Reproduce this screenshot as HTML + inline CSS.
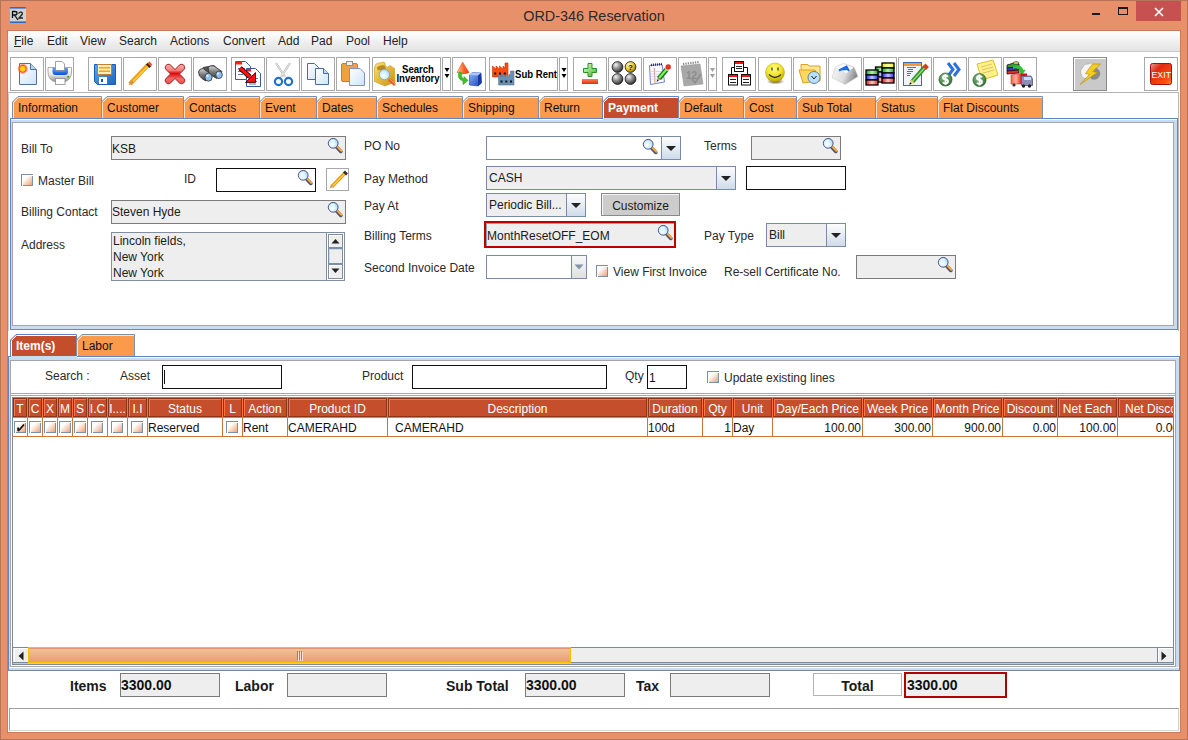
<!DOCTYPE html><html><head><meta charset="utf-8"><title>ORD-346 Reservation</title><style>
*{margin:0;padding:0;box-sizing:border-box}
html,body{width:1188px;height:740px;overflow:hidden}
body{position:relative;background:#e8906a;font-family:"Liberation Sans",sans-serif;font-size:12px;color:#222}
.a{position:absolute}
.t{font-size:12px;line-height:14px;white-space:nowrap;color:#2a2a2a}
.b{font-weight:bold}
</style></head><body>
<div class="a " style="left:0px;top:0px;width:1188px;height:1px;background:#b5755a"></div>
<div class="a " style="left:0px;top:0px;width:1px;height:740px;background:#b5755a"></div>
<div class="a " style="left:1187px;top:0px;width:1px;height:740px;background:#b5755a"></div>
<div class="a " style="left:0px;top:739px;width:1188px;height:1px;background:#b5755a"></div>
<div class="a " style="left:7px;top:30px;width:1174px;height:703px;background:#c97c5c"></div>
<div class="a " style="left:8px;top:31px;width:1172px;height:701px;background:#fff"></div>
<svg class="a" style="left:10px;top:7px" width="16" height="16"><rect x="0" y="0" width="16" height="16" fill="#cfd3d6"/><rect x="0" y="0" width="16" height="1.6" fill="#2a6ac8"/><rect x="0" y="14.4" width="16" height="1.6" fill="#2a6ac8"/>
<path d="M2.5 4.5 V11 M2 4.5 H5 Q7 4.5 7 6.3 Q7 8 5 8 H2.5 M4.5 8 L8 13" stroke="#111" stroke-width="1.3" fill="none"/>
<path d="M8.5 6.5 Q9.5 5 11 5.2 Q12.8 5.5 12.2 7.3 L9 11 H13" stroke="#222" stroke-width="1.3" fill="none"/></svg>
<div class="a" style="left:0;top:6px;width:1188px;text-align:center;font-size:14.4px;line-height:20px;color:#2b2b2b">ORD-346 Reservation</div>
<div class="a " style="left:1092px;top:13px;width:8px;height:2px;background:#1a1a1a"></div>
<div class="a " style="left:1118px;top:7px;width:10px;height:8px;border:1px solid #1a1a1a;border-top-width:2px"></div>
<div class="a " style="left:1136px;top:1px;width:45px;height:20px;background:#c75050"></div>
<svg class="a" style="left:1154px;top:7px" width="10" height="10" viewBox="0 0 10 10"><path d="M1 1L9 9M9 1L1 9" stroke="#fff" stroke-width="1.6"/></svg>
<div class="a " style="left:8px;top:31px;width:1172px;height:20px;background:linear-gradient(#ffffff,#e3e3e3)"></div>
<div class="a " style="left:8px;top:51px;width:1172px;height:1px;background:#c9c9c9"></div>
<div class="a t" style="left:14px;top:34px;color:#222">File</div>
<div class="a t" style="left:47px;top:34px;color:#222">Edit</div>
<div class="a t" style="left:80px;top:34px;color:#222">View</div>
<div class="a t" style="left:119px;top:34px;color:#222">Search</div>
<div class="a t" style="left:170px;top:34px;color:#222">Actions</div>
<div class="a t" style="left:223px;top:34px;color:#222">Convert</div>
<div class="a t" style="left:278px;top:34px;color:#222">Add</div>
<div class="a t" style="left:311px;top:34px;color:#222">Pad</div>
<div class="a t" style="left:346px;top:34px;color:#222">Pool</div>
<div class="a t" style="left:383px;top:34px;color:#222">Help</div>
<div class="a " style="left:14px;top:46px;width:7px;height:1px;background:#222"></div>
<div class="a " style="left:10px;top:57px;width:34px;height:34px;border:1px solid #a9a9a9;background:#fff"></div>
<div class="a " style="left:45px;top:57px;width:29px;height:34px;border:1px solid #a9a9a9;background:#fff"></div>
<div class="a " style="left:88px;top:57px;width:34px;height:34px;border:1px solid #a9a9a9;background:#fff"></div>
<div class="a " style="left:123px;top:57px;width:34px;height:34px;border:1px solid #a9a9a9;background:#fff"></div>
<div class="a " style="left:158px;top:57px;width:34px;height:34px;border:1px solid #a9a9a9;background:#fff"></div>
<div class="a " style="left:193px;top:57px;width:34px;height:34px;border:1px solid #a9a9a9;background:#fff"></div>
<div class="a " style="left:231px;top:57px;width:34px;height:34px;border:1px solid #a9a9a9;background:#fff"></div>
<div class="a " style="left:266px;top:57px;width:34px;height:34px;border:1px solid #a9a9a9;background:#fff"></div>
<div class="a " style="left:301px;top:57px;width:34px;height:34px;border:1px solid #a9a9a9;background:#fff"></div>
<div class="a " style="left:336px;top:57px;width:34px;height:34px;border:1px solid #a9a9a9;background:#fff"></div>
<div class="a " style="left:372px;top:57px;width:69px;height:34px;border:1px solid #a9a9a9;background:#fff"></div>
<div class="a " style="left:442px;top:57px;width:9px;height:34px;border:1px solid #a9a9a9;background:#fff"></div>
<div class="a " style="left:452px;top:57px;width:34px;height:34px;border:1px solid #a9a9a9;background:#fff"></div>
<div class="a " style="left:489px;top:57px;width:69px;height:34px;border:1px solid #a9a9a9;background:#fff"></div>
<div class="a " style="left:559px;top:57px;width:9px;height:34px;border:1px solid #a9a9a9;background:#fff"></div>
<div class="a " style="left:573px;top:57px;width:34px;height:34px;border:1px solid #a9a9a9;background:#fff"></div>
<div class="a " style="left:608px;top:57px;width:34px;height:34px;border:1px solid #a9a9a9;background:#fff"></div>
<div class="a " style="left:643px;top:57px;width:34px;height:34px;border:1px solid #a9a9a9;background:#fff"></div>
<div class="a " style="left:678px;top:57px;width:29px;height:34px;border:1px solid #a9a9a9;background:#fff"></div>
<div class="a " style="left:708px;top:57px;width:9px;height:34px;border:1px solid #a9a9a9;background:#fff"></div>
<div class="a " style="left:722px;top:57px;width:34px;height:34px;border:1px solid #a9a9a9;background:#fff"></div>
<div class="a " style="left:758px;top:57px;width:34px;height:34px;border:1px solid #a9a9a9;background:#fff"></div>
<div class="a " style="left:793px;top:57px;width:34px;height:34px;border:1px solid #a9a9a9;background:#fff"></div>
<div class="a " style="left:828px;top:57px;width:34px;height:34px;border:1px solid #a9a9a9;background:#fff"></div>
<div class="a " style="left:863px;top:57px;width:34px;height:34px;border:1px solid #a9a9a9;background:#fff"></div>
<div class="a " style="left:898px;top:57px;width:34px;height:34px;border:1px solid #a9a9a9;background:#fff"></div>
<div class="a " style="left:933px;top:57px;width:34px;height:34px;border:1px solid #a9a9a9;background:#fff"></div>
<div class="a " style="left:968px;top:57px;width:34px;height:34px;border:1px solid #a9a9a9;background:#fff"></div>
<div class="a " style="left:1003px;top:57px;width:34px;height:34px;border:1px solid #a9a9a9;background:#fff"></div>
<div class="a " style="left:1144px;top:57px;width:34px;height:34px;border:1px solid #a9a9a9;background:#fff"></div>
<div class="a " style="left:1073px;top:57px;width:34px;height:34px;border:1px solid #8a8a8a;background:#c9c9c9;box-shadow:inset 1px 1px 0 #fff"></div>
<div class="a b" style="left:388px;top:64px;width:60px;font-size:11px;line-height:11px;text-align:center;color:#000;transform:scaleX(0.87)">Search</div>
<div class="a b" style="left:388px;top:73px;width:60px;font-size:11px;line-height:11px;text-align:center;color:#000;transform:scaleX(0.87)">Inventory</div>
<div class="a b" style="left:515px;top:69px;font-size:11px;line-height:11px;color:#000;white-space:nowrap;transform:scaleX(0.87);transform-origin:0 0">Sub Rent</div>
<div class="a " style="left:8px;top:92px;width:1171px;height:1px;background:#b2b2b2"></div>
<div class="a " style="left:8px;top:92px;width:1px;height:239px;background:#c8ccd0"></div>
<div class="a " style="left:1178px;top:92px;width:1px;height:239px;background:#b8b8b8"></div>
<div class="a " style="left:10px;top:118px;width:1168px;height:1px;background:#6184c4"></div>
<div class="a " style="left:10px;top:118px;width:1px;height:212px;background:#6184c4"></div>
<div class="a " style="left:1177px;top:119px;width:1px;height:211px;background:#7a8899"></div>
<div class="a " style="left:10px;top:329px;width:1168px;height:1px;background:#7a8899"></div>
<div class="a " style="left:11px;top:119px;width:1166px;height:210px;background:#c8dcf1"></div>
<div class="a " style="left:11px;top:119px;width:1166px;height:1px;background:#fff"></div>
<div class="a " style="left:603px;top:118px;width:76px;height:2px;background:#c8dcf1"></div>
<div class="a " style="left:12px;top:122px;width:1162px;height:204px;background:#fff;border:1px solid #a6a6a6"></div>
<svg class="a" style="left:0;top:0" width="1188" height="740"><path d="M13 118V102L18 97H101V118Z" fill="#fb9a4b"/><path d="M13.5 118V102.5L18.5 97.5H101" fill="none" stroke="#ffe2c6" stroke-width="1"/><path d="M12.5 118V102L18 96.5H101.5V118" fill="none" stroke="#7d8fa6" stroke-width="1"/><path d="M102 118V102L107 97H183V118Z" fill="#fb9a4b"/><path d="M102.5 118V102.5L107.5 97.5H183" fill="none" stroke="#ffe2c6" stroke-width="1"/><path d="M101.5 118V102L107 96.5H183.5V118" fill="none" stroke="#7d8fa6" stroke-width="1"/><path d="M184 118V102L189 97H259V118Z" fill="#fb9a4b"/><path d="M184.5 118V102.5L189.5 97.5H259" fill="none" stroke="#ffe2c6" stroke-width="1"/><path d="M183.5 118V102L189 96.5H259.5V118" fill="none" stroke="#7d8fa6" stroke-width="1"/><path d="M260 118V102L265 97H316V118Z" fill="#fb9a4b"/><path d="M260.5 118V102.5L265.5 97.5H316" fill="none" stroke="#ffe2c6" stroke-width="1"/><path d="M259.5 118V102L265 96.5H316.5V118" fill="none" stroke="#7d8fa6" stroke-width="1"/><path d="M317 118V102L322 97H376V118Z" fill="#fb9a4b"/><path d="M317.5 118V102.5L322.5 97.5H376" fill="none" stroke="#ffe2c6" stroke-width="1"/><path d="M316.5 118V102L322 96.5H376.5V118" fill="none" stroke="#7d8fa6" stroke-width="1"/><path d="M377 118V102L382 97H462V118Z" fill="#fb9a4b"/><path d="M377.5 118V102.5L382.5 97.5H462" fill="none" stroke="#ffe2c6" stroke-width="1"/><path d="M376.5 118V102L382 96.5H462.5V118" fill="none" stroke="#7d8fa6" stroke-width="1"/><path d="M463 118V102L468 97H538V118Z" fill="#fb9a4b"/><path d="M463.5 118V102.5L468.5 97.5H538" fill="none" stroke="#ffe2c6" stroke-width="1"/><path d="M462.5 118V102L468 96.5H538.5V118" fill="none" stroke="#7d8fa6" stroke-width="1"/><path d="M539 118V102L544 97H602V118Z" fill="#fb9a4b"/><path d="M539.5 118V102.5L544.5 97.5H602" fill="none" stroke="#ffe2c6" stroke-width="1"/><path d="M538.5 118V102L544 96.5H602.5V118" fill="none" stroke="#7d8fa6" stroke-width="1"/><path d="M603 118V102L608 97H678V118Z" fill="#c44d2c"/><path d="M603.5 118V102.5L608.5 97.5H678" fill="none" stroke="#ffffff" stroke-width="1"/><path d="M602.5 118V102L608 96.5H678.5V118" fill="none" stroke="#6184c4" stroke-width="1"/><path d="M679 118V102L684 97H743V118Z" fill="#fb9a4b"/><path d="M679.5 118V102.5L684.5 97.5H743" fill="none" stroke="#ffe2c6" stroke-width="1"/><path d="M678.5 118V102L684 96.5H743.5V118" fill="none" stroke="#7d8fa6" stroke-width="1"/><path d="M744 118V102L749 97H796V118Z" fill="#fb9a4b"/><path d="M744.5 118V102.5L749.5 97.5H796" fill="none" stroke="#ffe2c6" stroke-width="1"/><path d="M743.5 118V102L749 96.5H796.5V118" fill="none" stroke="#7d8fa6" stroke-width="1"/><path d="M797 118V102L802 97H875V118Z" fill="#fb9a4b"/><path d="M797.5 118V102.5L802.5 97.5H875" fill="none" stroke="#ffe2c6" stroke-width="1"/><path d="M796.5 118V102L802 96.5H875.5V118" fill="none" stroke="#7d8fa6" stroke-width="1"/><path d="M876 118V102L881 97H937V118Z" fill="#fb9a4b"/><path d="M876.5 118V102.5L881.5 97.5H937" fill="none" stroke="#ffe2c6" stroke-width="1"/><path d="M875.5 118V102L881 96.5H937.5V118" fill="none" stroke="#7d8fa6" stroke-width="1"/><path d="M938 118V102L943 97H1042V118Z" fill="#fb9a4b"/><path d="M938.5 118V102.5L943.5 97.5H1042" fill="none" stroke="#ffe2c6" stroke-width="1"/><path d="M937.5 118V102L943 96.5H1042.5V118" fill="none" stroke="#7d8fa6" stroke-width="1"/></svg>
<div class="a t" style="left:18px;top:101px;color:#111">Information</div>
<div class="a t" style="left:107px;top:101px;color:#111">Customer</div>
<div class="a t" style="left:189px;top:101px;color:#111">Contacts</div>
<div class="a t" style="left:265px;top:101px;color:#111">Event</div>
<div class="a t" style="left:322px;top:101px;color:#111">Dates</div>
<div class="a t" style="left:382px;top:101px;color:#111">Schedules</div>
<div class="a t" style="left:468px;top:101px;color:#111">Shipping</div>
<div class="a t" style="left:544px;top:101px;color:#111">Return</div>
<div class="a t" style="left:608px;top:101px;color:#fff;font-weight:bold">Payment</div>
<div class="a t" style="left:684px;top:101px;color:#111">Default</div>
<div class="a t" style="left:749px;top:101px;color:#111">Cost</div>
<div class="a t" style="left:802px;top:101px;color:#111">Sub Total</div>
<div class="a t" style="left:881px;top:101px;color:#111">Status</div>
<div class="a t" style="left:943px;top:101px;color:#111">Flat Discounts</div>
<svg width="0" height="0" style="position:absolute"><defs>
<radialGradient id="lens" cx="0.4" cy="0.6" r="0.7"><stop offset="0" stop-color="#ffffff"/><stop offset="0.5" stop-color="#d2f2ff"/><stop offset="1" stop-color="#8fc8ea"/></radialGradient>
<linearGradient id="chk" x1="0" y1="0" x2="1" y2="1"><stop offset="0.25" stop-color="#ffffff"/><stop offset="1" stop-color="#f0a070"/></linearGradient>
<symbol id="mag" viewBox="0 0 16 17">
<path d="M9.2 9.6 L13.8 14.4" stroke="#50507a" stroke-width="3.6" stroke-linecap="round"/>
<path d="M10 9.3 L14.3 13.8" stroke="#f8a838" stroke-width="2" stroke-linecap="round"/>
<circle cx="6.2" cy="6.3" r="4.9" fill="url(#lens)" stroke="#55558a" stroke-width="1"/>
<path d="M4 4.5 Q5.5 3 7.5 3.6" stroke="#fff" stroke-width="0.9" fill="none"/>
</symbol>
</defs></svg>
<div class="a t" style="left:21px;top:142px;">Bill To</div>
<div class="a " style="left:111px;top:136px;width:235px;height:24px;border:1px solid #7b7b7b;background:#eeeeee;"></div>
<div class="a t" style="left:112px;top:142px;color:#1a1a1a">KSB</div>
<svg class="a" style="left:327px;top:137px" width="16" height="17"><use href="#mag"/></svg>
<svg class="a" style="left:21px;top:174px" width="12" height="12"><rect x="0" y="0" width="12" height="12" fill="#7990a8"/><rect x="1" y="1" width="10" height="10" fill="#fff"/><rect x="2" y="2" width="9" height="9" fill="url(#chk)"/><rect x="11" y="1" width="1" height="1" fill="#fff"/><rect x="1" y="11" width="1" height="1" fill="#fff"/></svg>
<div class="a t" style="left:38px;top:174px;">Master Bill</div>
<div class="a t" style="left:184px;top:172px;">ID</div>
<div class="a " style="left:216px;top:168px;width:100px;height:24px;border:1px solid #111;background:#fff;"></div>
<svg class="a" style="left:297px;top:169px" width="16" height="17"><use href="#mag"/></svg>
<div class="a " style="left:326px;top:168px;width:23px;height:23px;border:1px solid #a8a8a8;background:#fff"></div>
<svg class="a" style="left:326px;top:168px" width="23" height="23"><path d="M6 18.5 L19 5" stroke="#e89a10" stroke-width="3.6"/><path d="M6.5 18 L19.5 5" stroke="#ffd040" stroke-width="1.2"/><path d="M3.5 20.5 L5 16 L8 19Z" fill="#d0a070"/><path d="M18 3.5 L21 6.5" stroke="#303030" stroke-width="2.6"/></svg>
<div class="a t" style="left:21px;top:205px;">Billing Contact</div>
<div class="a " style="left:111px;top:200px;width:235px;height:24px;border:1px solid #7b7b7b;background:#eeeeee;"></div>
<div class="a t" style="left:112px;top:205px;color:#1a1a1a">Steven Hyde</div>
<svg class="a" style="left:327px;top:201px" width="16" height="17"><use href="#mag"/></svg>
<div class="a t" style="left:21px;top:238px;">Address</div>
<div class="a " style="left:111px;top:232px;width:234px;height:49px;border:1px solid #7f8ea0;background:#eeeeee"></div>
<div class="a t" style="left:113px;top:234px;color:#1a1a1a">Lincoln fields,</div>
<div class="a t" style="left:113px;top:250px;color:#1a1a1a">New York</div>
<div class="a t" style="left:113px;top:266px;color:#1a1a1a">New York</div>
<div class="a " style="left:326px;top:233px;width:18px;height:47px;border-left:1px solid #7f8ea0;background:#fff"></div>
<div class="a " style="left:328px;top:234px;width:15px;height:14px;border:1px solid #7f8ea0;background:#eeeeee;box-shadow:inset 1px 1px 0 #fff"></div>
<div class="a " style="left:328px;top:248px;width:15px;height:16px;border:1px solid #7f8ea0;background:#eeeeee;box-shadow:inset 1px 1px 0 #c8dcf1"></div>
<div class="a " style="left:328px;top:264px;width:15px;height:15px;border:1px solid #7f8ea0;background:#eeeeee;box-shadow:inset 1px 1px 0 #fff"></div>
<svg class="a" style="left:331px;top:238px" width="10" height="6"><path d="M0.5 5.5H8.5L4.5 1Z" fill="#222"/></svg>
<svg class="a" style="left:331px;top:268px" width="10" height="6"><path d="M0.5 0.5H8.5L4.5 5Z" fill="#222"/></svg>
<div class="a t" style="left:364px;top:139px;">PO No</div>
<div class="a " style="left:486px;top:136px;width:176px;height:24px;border:1px solid #788ca6;background:#fff;"></div>
<svg class="a" style="left:642px;top:138px" width="16" height="17"><use href="#mag"/></svg>
<div class="a " style="left:661px;top:136px;width:20px;height:24px;background:linear-gradient(#fdfdfd,#cfdbea);border:1px solid #788ca6"></div>
<svg class="a" style="left:666.0px;top:146.0px" width="10" height="6"><path d="M0 0H10L5 5Z" fill="#222"/></svg>
<div class="a t" style="left:364px;top:172px;">Pay Method</div>
<div class="a " style="left:486px;top:166px;width:250px;height:24px;border:1px solid #788ca6;background:#eeeeee;"></div>
<div class="a t" style="left:489px;top:171px;color:#1a1a1a">CASH</div>
<div class="a " style="left:716px;top:166px;width:20px;height:24px;background:linear-gradient(#fdfdfd,#cfdbea);border:1px solid #788ca6"></div>
<svg class="a" style="left:721.0px;top:176.0px" width="10" height="6"><path d="M0 0H10L5 5Z" fill="#222"/></svg>
<div class="a " style="left:746px;top:166px;width:100px;height:24px;border:1px solid #111;background:#fff;"></div>
<div class="a t" style="left:364px;top:199px;">Pay At</div>
<div class="a " style="left:486px;top:193px;width:100px;height:24px;border:1px solid #788ca6;background:#eeeeee;"></div>
<div class="a t" style="left:489px;top:198px;color:#1a1a1a">Periodic Bill...</div>
<div class="a " style="left:566px;top:193px;width:20px;height:24px;background:linear-gradient(#fdfdfd,#cfdbea);border:1px solid #788ca6"></div>
<svg class="a" style="left:571.0px;top:203.0px" width="10" height="6"><path d="M0 0H10L5 5Z" fill="#222"/></svg>
<div class="a " style="left:601px;top:193px;width:79px;height:23px;border:1px solid #8a8a8a;background:#cccccc;box-shadow:inset 1px 1px 0 #f4f4f4"></div>
<div class="a t" style="left:601px;top:199px;width:79px;text-align:center;color:#1a1a1a">Customize</div>
<div class="a t" style="left:364px;top:229px;">Billing Terms</div>
<div class="a " style="left:484px;top:221px;width:192px;height:27px;border:2px solid #c00000;background:#eeeeee;box-shadow:inset 1px 1px 0 #8ea0b0"></div>
<div class="a t" style="left:487px;top:229px;color:#1a1a1a">MonthResetOFF_EOM</div>
<svg class="a" style="left:657px;top:224px" width="16" height="17"><use href="#mag"/></svg>
<div class="a t" style="left:364px;top:261px;">Second Invoice Date</div>
<div class="a " style="left:486px;top:255px;width:85px;height:24px;border:1px solid #788ca6;border-right:none;background:#fff"></div>
<div class="a " style="left:571px;top:255px;width:16px;height:24px;border:1px solid #788ca6;background:linear-gradient(#f8f8f8,#e0e0e0)"></div>
<svg class="a" style="left:574px;top:264px" width="10" height="6"><path d="M0.5 0.5H9.5L5 5.5Z" fill="#8094aa"/></svg>
<svg class="a" style="left:596px;top:265px" width="12" height="12"><rect x="0" y="0" width="12" height="12" fill="#7990a8"/><rect x="1" y="1" width="10" height="10" fill="#fff"/><rect x="2" y="2" width="9" height="9" fill="url(#chk)"/><rect x="11" y="1" width="1" height="1" fill="#fff"/><rect x="1" y="11" width="1" height="1" fill="#fff"/></svg>
<div class="a t" style="left:613px;top:265px;">View First Invoice</div>
<div class="a t" style="left:704px;top:139px;">Terms</div>
<div class="a " style="left:751px;top:136px;width:90px;height:24px;border:1px solid #7b7b7b;background:#eeeeee;"></div>
<svg class="a" style="left:822px;top:137px" width="16" height="17"><use href="#mag"/></svg>
<div class="a t" style="left:704px;top:229px;">Pay Type</div>
<div class="a " style="left:766px;top:223px;width:80px;height:24px;border:1px solid #788ca6;background:#eeeeee;"></div>
<div class="a t" style="left:769px;top:228px;color:#1a1a1a">Bill</div>
<div class="a " style="left:826px;top:223px;width:20px;height:24px;background:linear-gradient(#fdfdfd,#cfdbea);border:1px solid #788ca6"></div>
<svg class="a" style="left:831.0px;top:233.0px" width="10" height="6"><path d="M0 0H10L5 5Z" fill="#222"/></svg>
<div class="a t" style="left:724px;top:265px;">Re-sell Certificate No.</div>
<div class="a " style="left:856px;top:255px;width:100px;height:24px;border:1px solid #7b7b7b;background:#eeeeee;"></div>
<svg class="a" style="left:937px;top:256px" width="16" height="17"><use href="#mag"/></svg>
<div class="a " style="left:8px;top:356px;width:1172px;height:315px;background:#c8dcf1"></div>
<div class="a " style="left:8px;top:356px;width:1172px;height:1px;background:#6184c4"></div>
<div class="a " style="left:8px;top:356px;width:1px;height:315px;background:#6184c4"></div>
<div class="a " style="left:1179px;top:357px;width:1px;height:314px;background:#7a8899"></div>
<div class="a " style="left:8px;top:670px;width:1172px;height:1px;background:#7a8899"></div>
<div class="a " style="left:9px;top:357px;width:1170px;height:1px;background:#fff"></div>
<div class="a " style="left:9px;top:667px;width:1170px;height:1px;background:#fff"></div>
<div class="a " style="left:11px;top:356px;width:66px;height:2px;background:#c8dcf1"></div>
<div class="a " style="left:10px;top:360px;width:1166px;height:307px;background:#fff;border:1px solid #a6a6a6"></div>
<svg class="a" style="left:0;top:0" width="1188" height="740"><path d="M11 356V340L16 335H76V356Z" fill="#c44d2c"/><path d="M11.5 356V340.5L16.5 335.5H76" fill="none" stroke="#ffffff" stroke-width="1"/><path d="M10.5 356V340L16 334.5H76.5V356" fill="none" stroke="#6184c4" stroke-width="1"/><path d="M77 356V340L82 335H134V356Z" fill="#fb9a4b"/><path d="M77.5 356V340.5L82.5 335.5H134" fill="none" stroke="#ffe2c6" stroke-width="1"/><path d="M76.5 356V340L82 334.5H134.5V356" fill="none" stroke="#7d8fa6" stroke-width="1"/></svg>
<div class="a t" style="left:16px;top:339px;color:#fff;font-weight:bold">Item(s)</div>
<div class="a t" style="left:82px;top:339px;color:#111">Labor</div>
<div class="a t" style="left:45px;top:369px;">Search :</div>
<div class="a t" style="left:120px;top:369px;">Asset</div>
<div class="a " style="left:162px;top:365px;width:120px;height:24px;border:1px solid #111;background:#fff"></div>
<div class="a " style="left:164px;top:370px;width:1px;height:14px;background:#111"></div>
<div class="a t" style="left:362px;top:369px;">Product</div>
<div class="a " style="left:412px;top:365px;width:195px;height:24px;border:1px solid #111;background:#fff"></div>
<div class="a t" style="left:625px;top:369px;">Qty</div>
<div class="a " style="left:647px;top:365px;width:40px;height:24px;border:1px solid #111;background:#fff"></div>
<div class="a t" style="left:649px;top:371px;color:#111">1</div>
<svg class="a" style="left:707px;top:371px" width="12" height="12"><rect x="0" y="0" width="12" height="12" fill="#7990a8"/><rect x="1" y="1" width="10" height="10" fill="#fff"/><rect x="2" y="2" width="9" height="9" fill="url(#chk)"/><rect x="11" y="1" width="1" height="1" fill="#fff"/><rect x="1" y="11" width="1" height="1" fill="#fff"/></svg>
<div class="a t" style="left:724px;top:371px;">Update existing lines</div>
<div class="a " style="left:10px;top:393px;width:1166px;height:1px;background:#a6a6a6"></div>
<div class="a " style="left:10px;top:395px;width:1165px;height:1px;background:#a6a6a6"></div>
<div class="a " style="left:12px;top:397px;width:1162px;height:268px;background:#fff;border-left:1px solid #7a8899;border-top:1px solid #7a8899;border-bottom:1px solid #7a8899"></div>
<div class="a" style="left:13px;top:398px;width:1160px;height:266px;overflow:hidden">
<div class="a" style="left:0;top:0;width:1400px;height:20px;background:#ff7142"></div>
<div class="a" style="left:0px;top:0;width:14px;height:19px;background:#c54e2d;border:1px solid #8e3519;box-shadow:inset 1px 1px 0 #ff7545"></div>
<div class="a t" style="left:0px;top:4px;width:14px;text-align:center;color:#fff;overflow:hidden;text-overflow:clip">T</div>
<div class="a" style="left:14px;top:20px;width:1px;height:18px;background:#c8753e"></div>
<svg class="a" style="left:1px;top:23px" width="12" height="12"><rect x="0" y="0" width="12" height="12" fill="#7990a8"/><rect x="1" y="1" width="10" height="10" fill="#fff"/><rect x="2" y="2" width="9" height="9" fill="url(#chk)"/><rect x="11" y="1" width="1" height="1" fill="#fff"/><rect x="1" y="11" width="1" height="1" fill="#fff"/><path d="M4 6.5 L4.3 10 L10 3.5" stroke="#111" stroke-width="1.8" fill="none" stroke-linejoin="bevel"/></svg>
<div class="a" style="left:15px;top:0;width:14px;height:19px;background:#c54e2d;border:1px solid #8e3519;box-shadow:inset 1px 1px 0 #ff7545"></div>
<div class="a t" style="left:15px;top:4px;width:14px;text-align:center;color:#fff;overflow:hidden;text-overflow:clip">C</div>
<div class="a" style="left:29px;top:20px;width:1px;height:18px;background:#c8753e"></div>
<svg class="a" style="left:16px;top:23px" width="12" height="12"><rect x="0" y="0" width="12" height="12" fill="#7990a8"/><rect x="1" y="1" width="10" height="10" fill="#fff"/><rect x="2" y="2" width="9" height="9" fill="url(#chk)"/><rect x="11" y="1" width="1" height="1" fill="#fff"/><rect x="1" y="11" width="1" height="1" fill="#fff"/></svg>
<div class="a" style="left:30px;top:0;width:14px;height:19px;background:#c54e2d;border:1px solid #8e3519;box-shadow:inset 1px 1px 0 #ff7545"></div>
<div class="a t" style="left:30px;top:4px;width:14px;text-align:center;color:#fff;overflow:hidden;text-overflow:clip">X</div>
<div class="a" style="left:44px;top:20px;width:1px;height:18px;background:#c8753e"></div>
<svg class="a" style="left:31px;top:23px" width="12" height="12"><rect x="0" y="0" width="12" height="12" fill="#7990a8"/><rect x="1" y="1" width="10" height="10" fill="#fff"/><rect x="2" y="2" width="9" height="9" fill="url(#chk)"/><rect x="11" y="1" width="1" height="1" fill="#fff"/><rect x="1" y="11" width="1" height="1" fill="#fff"/></svg>
<div class="a" style="left:45px;top:0;width:14px;height:19px;background:#c54e2d;border:1px solid #8e3519;box-shadow:inset 1px 1px 0 #ff7545"></div>
<div class="a t" style="left:45px;top:4px;width:14px;text-align:center;color:#fff;overflow:hidden;text-overflow:clip">M</div>
<div class="a" style="left:59px;top:20px;width:1px;height:18px;background:#c8753e"></div>
<svg class="a" style="left:46px;top:23px" width="12" height="12"><rect x="0" y="0" width="12" height="12" fill="#7990a8"/><rect x="1" y="1" width="10" height="10" fill="#fff"/><rect x="2" y="2" width="9" height="9" fill="url(#chk)"/><rect x="11" y="1" width="1" height="1" fill="#fff"/><rect x="1" y="11" width="1" height="1" fill="#fff"/></svg>
<div class="a" style="left:60px;top:0;width:14px;height:19px;background:#c54e2d;border:1px solid #8e3519;box-shadow:inset 1px 1px 0 #ff7545"></div>
<div class="a t" style="left:60px;top:4px;width:14px;text-align:center;color:#fff;overflow:hidden;text-overflow:clip">S</div>
<div class="a" style="left:74px;top:20px;width:1px;height:18px;background:#c8753e"></div>
<svg class="a" style="left:61px;top:23px" width="12" height="12"><rect x="0" y="0" width="12" height="12" fill="#7990a8"/><rect x="1" y="1" width="10" height="10" fill="#fff"/><rect x="2" y="2" width="9" height="9" fill="url(#chk)"/><rect x="11" y="1" width="1" height="1" fill="#fff"/><rect x="1" y="11" width="1" height="1" fill="#fff"/></svg>
<div class="a" style="left:75px;top:0;width:19px;height:19px;background:#c54e2d;border:1px solid #8e3519;box-shadow:inset 1px 1px 0 #ff7545"></div>
<div class="a t" style="left:75px;top:4px;width:19px;text-align:center;color:#fff;overflow:hidden;text-overflow:clip">I.C</div>
<div class="a" style="left:94px;top:20px;width:1px;height:18px;background:#c8753e"></div>
<svg class="a" style="left:78px;top:23px" width="12" height="12"><rect x="0" y="0" width="12" height="12" fill="#7990a8"/><rect x="1" y="1" width="10" height="10" fill="#fff"/><rect x="2" y="2" width="9" height="9" fill="url(#chk)"/><rect x="11" y="1" width="1" height="1" fill="#fff"/><rect x="1" y="11" width="1" height="1" fill="#fff"/></svg>
<div class="a" style="left:95px;top:0;width:19px;height:19px;background:#c54e2d;border:1px solid #8e3519;box-shadow:inset 1px 1px 0 #ff7545"></div>
<div class="a t" style="left:95px;top:4px;width:19px;text-align:center;color:#fff;overflow:hidden;text-overflow:clip">I....</div>
<div class="a" style="left:114px;top:20px;width:1px;height:18px;background:#c8753e"></div>
<svg class="a" style="left:98px;top:23px" width="12" height="12"><rect x="0" y="0" width="12" height="12" fill="#7990a8"/><rect x="1" y="1" width="10" height="10" fill="#fff"/><rect x="2" y="2" width="9" height="9" fill="url(#chk)"/><rect x="11" y="1" width="1" height="1" fill="#fff"/><rect x="1" y="11" width="1" height="1" fill="#fff"/></svg>
<div class="a" style="left:115px;top:0;width:19px;height:19px;background:#c54e2d;border:1px solid #8e3519;box-shadow:inset 1px 1px 0 #ff7545"></div>
<div class="a t" style="left:115px;top:4px;width:19px;text-align:center;color:#fff;overflow:hidden;text-overflow:clip">I.I</div>
<div class="a" style="left:134px;top:20px;width:1px;height:18px;background:#c8753e"></div>
<svg class="a" style="left:118px;top:23px" width="12" height="12"><rect x="0" y="0" width="12" height="12" fill="#7990a8"/><rect x="1" y="1" width="10" height="10" fill="#fff"/><rect x="2" y="2" width="9" height="9" fill="url(#chk)"/><rect x="11" y="1" width="1" height="1" fill="#fff"/><rect x="1" y="11" width="1" height="1" fill="#fff"/></svg>
<div class="a" style="left:135px;top:0;width:74px;height:19px;background:#c54e2d;border:1px solid #8e3519;box-shadow:inset 1px 1px 0 #ff7545"></div>
<div class="a t" style="left:135px;top:4px;width:74px;text-align:center;color:#fff;overflow:hidden;text-overflow:clip">Status</div>
<div class="a" style="left:209px;top:20px;width:1px;height:18px;background:#c8753e"></div>
<div class="a t" style="left:135px;top:23px;color:#111">Reserved</div>
<div class="a" style="left:210px;top:0;width:19px;height:19px;background:#c54e2d;border:1px solid #8e3519;box-shadow:inset 1px 1px 0 #ff7545"></div>
<div class="a t" style="left:210px;top:4px;width:19px;text-align:center;color:#fff;overflow:hidden;text-overflow:clip">L</div>
<div class="a" style="left:229px;top:20px;width:1px;height:18px;background:#c8753e"></div>
<svg class="a" style="left:213px;top:23px" width="12" height="12"><rect x="0" y="0" width="12" height="12" fill="#7990a8"/><rect x="1" y="1" width="10" height="10" fill="#fff"/><rect x="2" y="2" width="9" height="9" fill="url(#chk)"/><rect x="11" y="1" width="1" height="1" fill="#fff"/><rect x="1" y="11" width="1" height="1" fill="#fff"/></svg>
<div class="a" style="left:230px;top:0;width:44px;height:19px;background:#c54e2d;border:1px solid #8e3519;box-shadow:inset 1px 1px 0 #ff7545"></div>
<div class="a t" style="left:230px;top:4px;width:44px;text-align:center;color:#fff;overflow:hidden;text-overflow:clip">Action</div>
<div class="a" style="left:274px;top:20px;width:1px;height:18px;background:#c8753e"></div>
<div class="a t" style="left:230px;top:23px;color:#111">Rent</div>
<div class="a" style="left:275px;top:0;width:99px;height:19px;background:#c54e2d;border:1px solid #8e3519;box-shadow:inset 1px 1px 0 #ff7545"></div>
<div class="a t" style="left:275px;top:4px;width:99px;text-align:center;color:#fff;overflow:hidden;text-overflow:clip">Product ID</div>
<div class="a" style="left:374px;top:20px;width:1px;height:18px;background:#c8753e"></div>
<div class="a t" style="left:275px;top:23px;color:#111">CAMERAHD</div>
<div class="a" style="left:375px;top:0;width:259px;height:19px;background:#c54e2d;border:1px solid #8e3519;box-shadow:inset 1px 1px 0 #ff7545"></div>
<div class="a t" style="left:375px;top:4px;width:259px;text-align:center;color:#fff;overflow:hidden;text-overflow:clip">Description</div>
<div class="a" style="left:634px;top:20px;width:1px;height:18px;background:#c8753e"></div>
<div class="a t" style="left:382px;top:23px;color:#111">CAMERAHD</div>
<div class="a" style="left:635px;top:0;width:54px;height:19px;background:#c54e2d;border:1px solid #8e3519;box-shadow:inset 1px 1px 0 #ff7545"></div>
<div class="a t" style="left:635px;top:4px;width:54px;text-align:center;color:#fff;overflow:hidden;text-overflow:clip">Duration</div>
<div class="a" style="left:689px;top:20px;width:1px;height:18px;background:#c8753e"></div>
<div class="a t" style="left:635px;top:23px;color:#111">100d</div>
<div class="a" style="left:690px;top:0;width:29px;height:19px;background:#c54e2d;border:1px solid #8e3519;box-shadow:inset 1px 1px 0 #ff7545"></div>
<div class="a t" style="left:690px;top:4px;width:29px;text-align:center;color:#fff;overflow:hidden;text-overflow:clip">Qty</div>
<div class="a" style="left:719px;top:20px;width:1px;height:18px;background:#c8753e"></div>
<div class="a t" style="left:690px;top:23px;width:28px;text-align:right;color:#111">1</div>
<div class="a" style="left:720px;top:0;width:39px;height:19px;background:#c54e2d;border:1px solid #8e3519;box-shadow:inset 1px 1px 0 #ff7545"></div>
<div class="a t" style="left:720px;top:4px;width:39px;text-align:center;color:#fff;overflow:hidden;text-overflow:clip">Unit</div>
<div class="a" style="left:759px;top:20px;width:1px;height:18px;background:#c8753e"></div>
<div class="a t" style="left:720px;top:23px;color:#111">Day</div>
<div class="a" style="left:760px;top:0;width:89px;height:19px;background:#c54e2d;border:1px solid #8e3519;box-shadow:inset 1px 1px 0 #ff7545"></div>
<div class="a t" style="left:760px;top:4px;width:89px;text-align:center;color:#fff;overflow:hidden;text-overflow:clip">Day/Each Price</div>
<div class="a" style="left:849px;top:20px;width:1px;height:18px;background:#c8753e"></div>
<div class="a t" style="left:760px;top:23px;width:88px;text-align:right;color:#111">100.00</div>
<div class="a" style="left:850px;top:0;width:69px;height:19px;background:#c54e2d;border:1px solid #8e3519;box-shadow:inset 1px 1px 0 #ff7545"></div>
<div class="a t" style="left:850px;top:4px;width:69px;text-align:center;color:#fff;overflow:hidden;text-overflow:clip">Week Price</div>
<div class="a" style="left:919px;top:20px;width:1px;height:18px;background:#c8753e"></div>
<div class="a t" style="left:850px;top:23px;width:68px;text-align:right;color:#111">300.00</div>
<div class="a" style="left:920px;top:0;width:69px;height:19px;background:#c54e2d;border:1px solid #8e3519;box-shadow:inset 1px 1px 0 #ff7545"></div>
<div class="a t" style="left:920px;top:4px;width:69px;text-align:center;color:#fff;overflow:hidden;text-overflow:clip">Month Price</div>
<div class="a" style="left:989px;top:20px;width:1px;height:18px;background:#c8753e"></div>
<div class="a t" style="left:920px;top:23px;width:68px;text-align:right;color:#111">900.00</div>
<div class="a" style="left:990px;top:0;width:54px;height:19px;background:#c54e2d;border:1px solid #8e3519;box-shadow:inset 1px 1px 0 #ff7545"></div>
<div class="a t" style="left:990px;top:4px;width:54px;text-align:center;color:#fff;overflow:hidden;text-overflow:clip">Discount</div>
<div class="a" style="left:1044px;top:20px;width:1px;height:18px;background:#c8753e"></div>
<div class="a t" style="left:990px;top:23px;width:53px;text-align:right;color:#111">0.00</div>
<div class="a" style="left:1045px;top:0;width:59px;height:19px;background:#c54e2d;border:1px solid #8e3519;box-shadow:inset 1px 1px 0 #ff7545"></div>
<div class="a t" style="left:1045px;top:4px;width:59px;text-align:center;color:#fff;overflow:hidden;text-overflow:clip">Net Each</div>
<div class="a" style="left:1104px;top:20px;width:1px;height:18px;background:#c8753e"></div>
<div class="a t" style="left:1045px;top:23px;width:58px;text-align:right;color:#111">100.00</div>
<div class="a" style="left:1105px;top:0;width:62px;height:19px;background:#c54e2d;border:1px solid #8e3519;box-shadow:inset 1px 1px 0 #ff7545"></div>
<div class="a t" style="left:1112px;top:4px;color:#fff">Net Discount</div>
<div class="a" style="left:1167px;top:20px;width:1px;height:18px;background:#c8753e"></div>
<div class="a t" style="left:1105px;top:23px;width:61px;text-align:right;color:#111">0.00</div>
<div class="a" style="left:0;top:38px;width:1400px;height:1px;background:#c8753e"></div>
</div>
<div class="a " style="left:13px;top:647px;width:1160px;height:16px;background:#eeeeee;border-top:1px solid #7a8899;border-bottom:1px solid #7a8899"></div>
<div class="a " style="left:14px;top:648px;width:14px;height:14px;background:#eeeeee;box-shadow:inset 1px 1px 0 #fff"></div>
<svg class="a" style="left:18px;top:651px" width="6" height="10"><path d="M5.5 0.5V9.5L0.5 5Z" fill="#222"/></svg>
<div class="a " style="left:1157px;top:648px;width:15px;height:14px;background:#eeeeee;border-left:1px solid #7a8899;box-shadow:inset 1px 1px 0 #fff"></div>
<svg class="a" style="left:1161px;top:651px" width="6" height="10"><path d="M0.5 0.5V9.5L5.5 5Z" fill="#222"/></svg>
<div class="a " style="left:28px;top:647px;width:543px;height:16px;border:1px solid #ffbf00;background:linear-gradient(#f2c29c,#e6a06e);box-shadow:inset 0 1px 0 #e8946a"></div>
<div class="a " style="left:13px;top:663px;width:1160px;height:1px;background:#b8cce4"></div>
<svg class="a" style="left:297px;top:651px" width="7" height="10"><path d="M0.5 0V9M2.5 0V9M4.5 0V9" stroke="#8a80a0" stroke-width="1"/><path d="M1.5 1V10M3.5 1V10M5.5 1V10" stroke="#ffe0c8" stroke-width="1"/></svg>
<div class="a " style="left:1173px;top:397px;width:1px;height:268px;background:#7a8899"></div>
<div class="a b" style="left:70px;top:678px;font-size:14px;line-height:16px;color:#1a1a1a">Items</div>
<div class="a " style="left:120px;top:673px;width:100px;height:24px;border:1px solid #7b7b7b;background:#eeeeee;"></div>
<div class="a b" style="left:121px;top:677px;font-size:14px;line-height:16px;color:#111">3300.00</div>
<div class="a b" style="left:235px;top:678px;font-size:14px;line-height:16px;color:#1a1a1a">Labor</div>
<div class="a " style="left:287px;top:673px;width:100px;height:24px;border:1px solid #7b7b7b;background:#eeeeee;"></div>
<div class="a b" style="left:446px;top:678px;font-size:14px;line-height:16px;color:#1a1a1a">Sub Total</div>
<div class="a " style="left:525px;top:673px;width:100px;height:24px;border:1px solid #7b7b7b;background:#eeeeee;"></div>
<div class="a b" style="left:526px;top:677px;font-size:14px;line-height:16px;color:#111">3300.00</div>
<div class="a b" style="left:636px;top:678px;font-size:14px;line-height:16px;color:#1a1a1a">Tax</div>
<div class="a " style="left:670px;top:673px;width:100px;height:24px;border:1px solid #7b7b7b;background:#eeeeee;"></div>
<div class="a " style="left:813px;top:673px;width:89px;height:23px;border:1px solid #b4b4b4;background:#fff"></div>
<div class="a b" style="left:813px;top:678px;width:89px;text-align:center;font-size:14px;line-height:16px;color:#1a1a1a">Total</div>
<div class="a " style="left:904px;top:672px;width:103px;height:26px;border:2px solid #b00000;background:#eeeeee"></div>
<div class="a b" style="left:907px;top:677px;font-size:14px;line-height:16px;color:#111">3300.00</div>
<div class="a " style="left:9px;top:708px;width:1170px;height:23px;border:1px solid #a0a0a0;border-right-color:#d0d0d0;border-bottom-color:#d8d8d8;background:#fff"></div>

<svg class="a" style="left:0;top:0" width="1188" height="100">
<defs>
<linearGradient id="g_page" x1="0" y1="0" x2="1" y2="1"><stop offset="0" stop-color="#ffffff"/><stop offset="1" stop-color="#cfe4f7"/></linearGradient>
<linearGradient id="g_blue" x1="0" y1="0" x2="1" y2="1"><stop offset="0" stop-color="#5aa8f0"/><stop offset="1" stop-color="#1e64c8"/></linearGradient>
<radialGradient id="g_ball" cx="0.35" cy="0.3" r="0.75"><stop offset="0" stop-color="#f4f4f4"/><stop offset="0.5" stop-color="#8a8a8a"/><stop offset="1" stop-color="#2a2a2a"/></radialGradient>
<radialGradient id="g_yball" cx="0.35" cy="0.3" r="0.75"><stop offset="0" stop-color="#fff8c0"/><stop offset="0.6" stop-color="#f0c020"/><stop offset="1" stop-color="#8a6a00"/></radialGradient>
<radialGradient id="g_smile" cx="0.45" cy="0.3" r="0.75"><stop offset="0" stop-color="#ffff80"/><stop offset="0.55" stop-color="#f0e020"/><stop offset="0.85" stop-color="#c8b000"/><stop offset="1" stop-color="#8a7a00"/></radialGradient>
<radialGradient id="g_coin" cx="0.4" cy="0.35" r="0.7"><stop offset="0" stop-color="#8cc08c"/><stop offset="1" stop-color="#2e6a32"/></radialGradient>
<linearGradient id="g_exit" x1="0" y1="0" x2="1" y2="1"><stop offset="0" stop-color="#e8a090"/><stop offset="0.3" stop-color="#e02a10"/><stop offset="0.8" stop-color="#ff5010"/><stop offset="1" stop-color="#ff9030"/></linearGradient>
<linearGradient id="g_box" x1="0" y1="0" x2="1" y2="1"><stop offset="0" stop-color="#ffe070"/><stop offset="1" stop-color="#c89010"/></linearGradient>
</defs>
<!-- 1 new doc -->
<radialGradient id="g_burst" cx="0.5" cy="0.5" r="0.5"><stop offset="0" stop-color="#ffe820"/><stop offset="0.45" stop-color="#ffc010"/><stop offset="0.6" stop-color="#ff5020"/><stop offset="1" stop-color="#ff6040" stop-opacity="0"/></radialGradient>
<path d="M19.5 63.5H30.5L36.5 69.5V84.5H19.5Z" fill="url(#g_page)" stroke="#55709f"/>
<path d="M30.5 63.5V69.5H36.5" fill="#b0d8f4" stroke="#55709f"/>
<circle cx="22.7" cy="68.8" r="5.6" fill="url(#g_burst)"/>
<!-- 2 printer -->
<linearGradient id="g_prn" x1="0" y1="0" x2="0" y2="1"><stop offset="0" stop-color="#ffffff"/><stop offset="0.5" stop-color="#e8e8e0"/><stop offset="1" stop-color="#8a8a8a"/></linearGradient>
<linearGradient id="g_tray" x1="0" y1="0" x2="0" y2="1"><stop offset="0" stop-color="#6aa8ff"/><stop offset="1" stop-color="#0a50d8"/></linearGradient>
<path d="M48 67.5 H71.5 V72 Q71.5 80 64 82 H55.5 Q48 80 48 72Z" fill="url(#g_prn)" stroke="#9a9a9a" stroke-width="0.8"/>
<path d="M52.5 67.5 H68 V71.5 Q68 75 65 75 H55.5 Q52.5 75 52.5 71.5Z" fill="url(#g_tray)"/>
<path d="M55.5 61.5H62L64.5 64V71H55.5Z" fill="#fff" stroke="#8a8a8a" stroke-width="0.8"/>
<rect x="55.5" y="70" width="9" height="1.5" fill="#8a8a9a"/>
<rect x="55.5" y="78.5" width="9.5" height="6" fill="#fff" stroke="#8a8a8a" stroke-width="0.8"/>
<circle cx="68.2" cy="76.7" r="1" fill="#20a020"/>
<!-- 3 save -->
<path d="M94.5 64.5H115.5V84.5H97.5L94.5 81.5Z" fill="url(#g_blue)" stroke="#1a5ab8"/>
<rect x="97.5" y="64.5" width="14" height="10" fill="#fff0b8" stroke="#c08030"/>
<rect x="99" y="67" width="11" height="1.5" fill="#f8a020"/><rect x="99" y="70.5" width="11" height="1.5" fill="#f8a020"/>
<rect x="99" y="77" width="8" height="7" fill="#fff"/><rect x="101" y="79" width="2" height="3" fill="#1a5ab8"/>
<!-- 4 pencil -->
<path d="M130 84 L148 65" stroke="#f0a010" stroke-width="4.5"/>
<path d="M131 83.5 L148.5 65.5" stroke="#ffd040" stroke-width="1.5"/>
<path d="M128.5 85.5 L131.5 80 L134 82.5Z" fill="#c89060"/>
<path d="M147 63.5 L150.5 67" stroke="#302010" stroke-width="3"/>
<path d="M148.5 62.5 L151.5 65.5" stroke="#ff5020" stroke-width="2.5"/>
<!-- 5 X -->
<linearGradient id="g_x" gradientUnits="userSpaceOnUse" x1="0" y1="64" x2="0" y2="85"><stop offset="0" stop-color="#f8b0b0"/><stop offset="0.3" stop-color="#f08080"/><stop offset="0.45" stop-color="#e00808"/><stop offset="0.7" stop-color="#f06a6a"/><stop offset="1" stop-color="#f04848"/></linearGradient>
<path d="M168.5 67.5 L181.5 80.5 M181.5 67.5 L168.5 80.5" stroke="#a83030" stroke-width="7.2" stroke-linecap="round"/>
<path d="M168.5 67.5 L181.5 80.5 M181.5 67.5 L168.5 80.5" stroke="url(#g_x)" stroke-width="5.4" stroke-linecap="round"/>
<!-- 6 binoculars -->
<linearGradient id="g_bin" x1="0" y1="0" x2="0" y2="1"><stop offset="0" stop-color="#d8d8d8"/><stop offset="0.5" stop-color="#7a7a7a"/><stop offset="1" stop-color="#3a3a3a"/></linearGradient>
<path d="M203 67.5 L214 65.5 L217 69 L207 72Z" fill="#555" stroke="#333" stroke-width="0.8"/>
<path d="M198.5 72 Q199 68.5 203 68.5 L210.5 74 L206 81 Q203 80 199.5 76Z" fill="url(#g_bin)" stroke="#333" stroke-width="0.9"/>
<path d="M208 67.5 Q210 65 214 66 L222 71.5 L217 78.5 Q213 77 209 73Z" fill="url(#g_bin)" stroke="#333" stroke-width="0.9"/>
<ellipse cx="208.5" cy="77.2" rx="3.6" ry="4" fill="#8cc0f0" stroke="#404040" stroke-width="0.9"/>
<ellipse cx="219" cy="74.8" rx="3.3" ry="3.7" fill="#8cc0f0" stroke="#404040" stroke-width="0.9"/>
<circle cx="207.5" cy="76" r="1.2" fill="#e0f0ff"/><circle cx="218" cy="73.7" r="1.1" fill="#e0f0ff"/>
<!-- 7 copy docs with arrow -->
<path d="M235.5 61.5H245.5L250.5 66.5V79.5H235.5Z" fill="#fff" stroke="#3a5aa0"/>
<rect x="236" y="62" width="6" height="2.5" fill="#ff2010"/>
<path d="M238 68.5H245 M238 71.5H244 M238 74.5H243" stroke="#4a6ab0" stroke-width="0.9"/>
<path d="M246.5 68.5H255.5L260.5 73.5V86.5H246.5Z" fill="#fff" stroke="#3a5aa0"/>
<rect x="247" y="69" width="4" height="2.5" fill="#ff2010"/>
<path d="M249 78.5H258 M249 81.5H257 M249 84H256" stroke="#4a6ab0" stroke-width="0.9"/>
<path d="M240 68 L250 77" stroke="#000" stroke-width="5"/>
<path d="M240 68 L250 77" stroke="#ff1010" stroke-width="3.2"/>
<path d="M245.5 82.5 L255.5 82.5 L255.5 72.5Z" fill="#ff1010" stroke="#200" stroke-width="0.8"/>
<!-- 8 scissors -->
<path d="M276 63 L285 77 M290 63 L281 77" stroke="#b8b8b8" stroke-width="2.2"/>
<path d="M276 63 L285 77 M290 63 L281 77" stroke="#f4f4f4" stroke-width="0.8"/>
<circle cx="278.5" cy="81.5" r="3.6" fill="none" stroke="#2070d0" stroke-width="2.2"/>
<circle cx="288.5" cy="81.5" r="3.6" fill="none" stroke="#2070d0" stroke-width="2.2"/>
<!-- 9 copy -->
<path d="M307.5 63.5H314.5L318.5 67.5V79.5H307.5Z" fill="url(#g_page)" stroke="#4a6aa0"/>
<path d="M315.5 68.5H323.5L328.5 73.5V84.5H315.5Z" fill="url(#g_page)" stroke="#4a6aa0"/>
<path d="M323.5 68.5V73.5H328.5" fill="#b8dcf4" stroke="#4a6aa0"/>
<!-- 10 paste -->
<rect x="341.5" y="63.5" width="16" height="18" rx="1.5" fill="#f0a040" stroke="#c88020"/>
<rect x="346.5" y="61.5" width="6" height="4" fill="#f0f0f0" stroke="#909090"/>
<path d="M349.5 68.5H360L364.5 73V85.5H349.5Z" fill="url(#g_page)" stroke="#7890d8"/>
<!-- 11 search inventory -->
<path d="M374.5 68 Q375 64 377 63.5 L384 62 Q385.5 63 385 65 L387 67.5 L390 65.5 L394.5 68.5 L395 82 L385 86 L374.5 81.5Z" fill="url(#g_box)" stroke="#c89818" stroke-width="0.6"/>
<path d="M377 67 Q381 64.5 384.5 65.5 L386 68.5 Q381 71 377.5 70Z" fill="#9a7010" opacity="0.7"/>
<circle cx="384.5" cy="74.5" r="5.2" fill="url(#lens)" stroke="#8aa0b8" stroke-width="0.9"/>
<path d="M389 79 L395 85" stroke="#e85030" stroke-width="2.8"/>
<path d="M389.5 78.8 L395.3 84.5" stroke="#f8d040" stroke-width="0.9"/>
<!-- 12 dropdown -->
<path d="M444.5 68H449.5L447 72Z M444.5 74H449.5L447 78Z" fill="#000"/>
<!-- 13 shapes -->
<linearGradient id="g_cone" x1="0" y1="0" x2="1" y2="0"><stop offset="0" stop-color="#ffd0a0"/><stop offset="0.5" stop-color="#ff7030"/><stop offset="1" stop-color="#e83010"/></linearGradient>
<linearGradient id="g_cube" x1="0" y1="0" x2="1" y2="1"><stop offset="0" stop-color="#8ab8ff"/><stop offset="1" stop-color="#1a40b0"/></linearGradient>
<path d="M462.6 62 L469 72.5 Q463 75.5 457 72.5Z" fill="url(#g_cone)" stroke="#e04010" stroke-width="0.5"/>
<path d="M459 72 Q456.5 79 463 81 L463 84.5 L468 80.5 L464 76.5 L464 79 Q460.5 77.5 462 72.5Z" fill="#40c030" stroke="#30a020" stroke-width="0.6"/>
<path d="M469.5 75 L472.5 72.5 L481 73 L481.5 83 L478 86 L469.5 85Z" fill="url(#g_cube)" stroke="#2040a0" stroke-width="0.6"/>
<path d="M469.5 75 L472.5 72.5 L481 73 L478 75.5Z" fill="#a8c8ff"/>
<path d="M478 75.5 L481 73 L481.5 83 L478 86Z" fill="#1a3a9a"/>
<!-- 14 sub rent -->
<path d="M492.5 77 V66 L496 69 V66 L499.5 69 V66 L503 69 V66 L505 68 V63 H508 V77Z" fill="#ff4a10" stroke="#d03000" stroke-width="0.6"/>
<path d="M498.5 85 V74 L502 77 V74 L505.5 77 V74 L509 77 V74 L510.5 75.5 V71 H514 V85Z" fill="#6890b0" stroke="#5a7a98" stroke-width="0.6"/>
<rect x="494.2" y="72.5" width="2" height="2" fill="#111"/><rect x="499" y="72.5" width="2" height="2" fill="#111"/><rect x="503.8" y="72.5" width="2" height="2" fill="#111"/>
<rect x="500.5" y="80.5" width="2" height="2" fill="#111"/><rect x="505.3" y="80.5" width="2" height="2" fill="#111"/><rect x="510" y="80.5" width="2" height="2" fill="#111"/>
<!-- 15 dropdown -->
<path d="M561.5 68H566.5L564 72Z M561.5 74H566.5L564 78Z" fill="#000"/>
<!-- 16 plus minus -->
<linearGradient id="g_plus" x1="0" y1="0" x2="1" y2="1"><stop offset="0" stop-color="#e8ffd0"/><stop offset="1" stop-color="#40b030"/></linearGradient>
<linearGradient id="g_minus" x1="0" y1="0" x2="0" y2="1"><stop offset="0" stop-color="#ff8050"/><stop offset="1" stop-color="#e82a10"/></linearGradient>
<path d="M583.5 68.5H588V63.5H592V68.5H596.5V72.5H592V76.5H588V72.5H583.5Z" fill="url(#g_plus)" stroke="#2a9020" stroke-width="1"/>
<rect x="582" y="79" width="16" height="5" fill="url(#g_minus)"/>
<!-- 17 balls -->
<circle cx="617.5" cy="67" r="5.4" fill="url(#g_ball)" stroke="#111" stroke-width="0.8"/>
<circle cx="630.5" cy="67" r="5.4" fill="url(#g_yball)" stroke="#111" stroke-width="0.8"/>
<circle cx="617.5" cy="79" r="5.4" fill="url(#g_ball)" stroke="#111" stroke-width="0.8"/>
<circle cx="630.5" cy="79" r="5.4" fill="url(#g_ball)" stroke="#111" stroke-width="0.8"/>
<text x="628" y="70" font-family="Liberation Sans" font-weight="bold" font-size="8" fill="#111">?</text>
<!-- 18 notepad -->
<path d="M649.5 65.5 L662 64.5 L664.5 82 L650.5 84.5Z" fill="#fbfbff" stroke="#6a70c8" stroke-width="0.9"/>
<path d="M654.2 68 L655 83" stroke="#f07050" stroke-width="0.8"/>
<path d="M651 71.5H662 M651 74H662 M651.5 76.5H663 M651.5 79H663" stroke="#b8d0f0" stroke-width="0.7"/>
<path d="M651 65 L662 64" stroke="#222" stroke-width="2.4" stroke-dasharray="0.9 1.1"/>
<path d="M659 78.5 L667 69" stroke="#108010" stroke-width="5"/>
<path d="M659.3 77.8 L666.8 69" stroke="#8af060" stroke-width="2"/>
<path d="M657 81 L657.8 77 L660.5 79.5Z" fill="#c09060"/><path d="M656.6 81.8 L657.2 79.5 L658.8 80.8Z" fill="#222"/>
<path d="M665 67.5 L668.5 71" stroke="#e0e0e0" stroke-width="1.3"/>
<circle cx="668.2" cy="67" r="2.7" fill="#e83020"/>
<!-- 19 calendar disabled -->
<path d="M681 66 L700 64 L703 84 L684 86Z" fill="#a8a8a8" stroke="#989898" stroke-width="0.6"/>
<path d="M683 64 L699 62" stroke="#8a8a8a" stroke-width="2.2" stroke-dasharray="1.3 1.1"/>
<text x="686" y="79" font-family="Liberation Sans" font-weight="bold" font-size="10" fill="#8c8c8c">12</text>
<path d="M692 79 L695 83 L701 74" stroke="#8c8c8c" stroke-width="1.5" fill="none"/>
<!-- 20 dropdown disabled -->
<path d="M710 68H715L712.5 72Z M710 74H715L712.5 78Z" fill="#a0a0a0"/>
<!-- 21 hierarchy -->
<path d="M731.5 75V67.5H747.5V75" fill="none" stroke="#111" stroke-width="1"/>
<rect x="734.5" y="61.5" width="9" height="10" fill="#fff" stroke="#111"/>
<rect x="735" y="62" width="8" height="2" fill="#ff1010"/>
<path d="M736 66.5H742M736 68.5H742" stroke="#222"/>
<rect x="728.5" y="74.5" width="9" height="10.5" fill="#fff" stroke="#111"/>
<rect x="729" y="75" width="8" height="2" fill="#ff1010"/>
<path d="M730 79.5H736M730 82.5H736" stroke="#222"/>
<rect x="741.5" y="74.5" width="9" height="10.5" fill="#fff" stroke="#111"/>
<rect x="742" y="75" width="8" height="2" fill="#ff1010"/>
<path d="M743 79.5H749M743 82.5H749" stroke="#222"/>
<!-- 22 smiley -->
<radialGradient id="g_shadow" cx="0.5" cy="0.5" r="0.5"><stop offset="0" stop-color="#5a4a10"/><stop offset="1" stop-color="#5a4a10" stop-opacity="0"/></radialGradient>
<ellipse cx="775.5" cy="81.5" rx="9" ry="3" fill="url(#g_shadow)"/>
<circle cx="775" cy="72.5" r="9.5" fill="url(#g_smile)" stroke="#b0a020" stroke-width="0.5"/>
<path d="M772 67.5V70.5 M778 67.5V70.5" stroke="#333" stroke-width="1.2"/>
<path d="M769 74.5 Q775 80.5 781 74.5" fill="none" stroke="#333" stroke-width="1.3"/>
<!-- 23 folder clock -->
<path d="M801 68 L801 64.5 L808 64.5 L809 66 L820 66 L820 81 L804 81Z" fill="#ffe890" stroke="#e0a020"/>
<path d="M799 70 L815 70 L819 81 L803 83Z" fill="#ffd860" stroke="#e0a020"/>
<circle cx="814" cy="77.5" r="6" fill="#b8e0ff" stroke="#6080a0" stroke-width="1"/>
<path d="M811.5 76 L814 79 L816.5 76" fill="none" stroke="#222" stroke-width="1"/>
<!-- 24 key -->
<linearGradient id="g_key" x1="0" y1="0" x2="1" y2="0.3"><stop offset="0" stop-color="#f8f8f8"/><stop offset="0.6" stop-color="#dedede"/><stop offset="1" stop-color="#8a8a8a"/></linearGradient>
<path d="M835.5 67 L843.5 63.5 L854 67 L858 76.5 L845 84.5 L832 77.5Z" fill="url(#g_key)" stroke="#c8c8c8" stroke-width="0.6"/>
<path d="M835.5 67.5 L843.5 64 L853.5 67.5 L846.5 73 Z" fill="#ffffff"/>
<path d="M839 70.5 L846.5 66.5 L849 71 M841.5 69.5 L847.5 69" stroke="#1a6ae8" stroke-width="2" fill="none"/>
<!-- 25 cubes -->
<linearGradient id="g_cg" x1="0" y1="0" x2="1" y2="0"><stop offset="0" stop-color="#20a020"/><stop offset="0.5" stop-color="#b8f0b8"/><stop offset="1" stop-color="#30a830"/></linearGradient>
<linearGradient id="g_cb" x1="0" y1="0" x2="1" y2="0"><stop offset="0" stop-color="#2020e0"/><stop offset="0.5" stop-color="#c0c8ff"/><stop offset="1" stop-color="#3030e8"/></linearGradient>
<linearGradient id="g_cr" x1="0" y1="0" x2="1" y2="0"><stop offset="0" stop-color="#e02020"/><stop offset="0.5" stop-color="#ffc0c0"/><stop offset="1" stop-color="#e83030"/></linearGradient>
<linearGradient id="g_cy" x1="0" y1="0" x2="1" y2="0"><stop offset="0" stop-color="#e0e020"/><stop offset="0.5" stop-color="#ffffb0"/><stop offset="1" stop-color="#e8e830"/></linearGradient>
<g stroke="#000" stroke-width="1.3">
<rect x="875.5" y="67" width="11" height="5" fill="url(#g_cg)"/><rect x="875.5" y="72" width="11" height="5" fill="url(#g_cb)"/><rect x="875.5" y="77" width="11" height="5" fill="url(#g_cr)"/>
<rect x="866" y="70" width="12" height="5" fill="url(#g_cg)"/><rect x="866" y="75" width="12" height="5" fill="url(#g_cb)"/><rect x="866" y="80" width="12" height="5" fill="url(#g_cr)"/>
<rect x="882" y="63" width="12" height="5" fill="url(#g_cy)"/><rect x="882" y="68" width="12" height="5" fill="url(#g_cg)"/><rect x="882" y="73" width="12" height="5" fill="url(#g_cb)"/><rect x="882" y="78" width="12" height="5" fill="url(#g_cr)"/>
</g>
<!-- 26 note pencil -->
<rect x="903.5" y="62.5" width="18" height="23" fill="#f0f4ff" stroke="#3070c0"/>
<rect x="904" y="63" width="17" height="3" fill="#f89830"/>
<path d="M907 67.5H916 M908 69.5H913 M907 71.5H913 M907 73.5H911 M907 75.5H910" stroke="#2a6ac0" stroke-width="0.9"/>
<path d="M912 82 L925 67" stroke="#309030" stroke-width="4.5"/>
<path d="M912.5 81 L925 67.5" stroke="#90e070" stroke-width="1.4"/>
<path d="M924 65 L927.5 68.5" stroke="#e03820" stroke-width="4"/>
<path d="M909.5 84.5 L911 79.5 L914.5 82.5Z" fill="#f0d060"/><path d="M909.3 84.8 L910 82.3 L911.8 83.8Z" fill="#111"/>
<!-- 27 $ arrows -->
<path d="M948 63 L953 69.5 L948 76 M954 63 L959 69.5 L954 76" fill="none" stroke="#2a70e0" stroke-width="3"/>
<circle cx="945.5" cy="79.5" r="6.6" fill="url(#g_coin)" stroke="#2a5a2a" stroke-width="0.6"/>
<path d="M948 76.8 Q947 75.5 945.5 75.5 Q943 75.5 943 77.5 Q943 79.3 945.5 79.5 Q948 79.8 948 81.6 Q948 83.5 945.5 83.5 Q943.8 83.5 943 82.2 M945.5 74 V85" stroke="#fff" stroke-width="1.8" fill="none"/>
<!-- 28 $ note -->
<path d="M977 64 L993 60 L998 75 L982 80Z" fill="#fff090" stroke="#e0c020"/>
<path d="M981 67 L992 64 M982 70 L993 67 M983 73 L994 70" stroke="#d8c050" stroke-width="0.9"/>
<circle cx="979.5" cy="80" r="6.6" fill="url(#g_coin)" stroke="#2a5a2a" stroke-width="0.6"/>
<path d="M982 77.3 Q981 76 979.5 76 Q977 76 977 78 Q977 79.8 979.5 80 Q982 80.3 982 82.1 Q982 84 979.5 84 Q977.8 84 977 82.7 M979.5 74.5 V85.5" stroke="#fff" stroke-width="1.8" fill="none"/>
<!-- 29 truck -->
<g stroke="#111" stroke-width="0.8">
<path d="M1007 65 L1014 63 L1019 64 L1019 67 L1007 68Z" fill="#30a030"/>
<path d="M1007 68 L1019 67 L1019 70 L1007 71Z" fill="#3040d0"/>
<path d="M1007 71 L1019 70 L1019 73 L1007 74Z" fill="#e03030"/>
</g>
<ellipse cx="1016" cy="63" rx="3" ry="1.3" fill="#e8e060" stroke="#222" stroke-width="0.6"/>
<path d="M1013 66 Q1021 63.5 1023.5 70 L1026 69.5 L1022 75 L1018.5 70.5 L1020.5 70.8 Q1018.5 67.8 1013 68.5Z" fill="#30c030"/>
<linearGradient id="g_truck" x1="0" y1="0" x2="1" y2="0"><stop offset="0" stop-color="#ff6040"/><stop offset="0.5" stop-color="#ffb0a0"/><stop offset="1" stop-color="#e83020"/></linearGradient>
<path d="M1011 75 L1021 73.5 L1021 84 L1011 84Z" fill="url(#g_truck)" stroke="#b04030" stroke-width="0.6"/>
<rect x="1021" y="73.5" width="6" height="2.5" fill="#e01010"/>
<path d="M1021.5 76 H1031 L1032.5 79 V85.5 H1021.5Z" fill="#8a90b8" stroke="#404060" stroke-width="0.7"/>
<rect x="1024" y="77" width="7" height="3" fill="#c0e0ff"/>
<circle cx="1014" cy="85" r="1.6" fill="#333"/><circle cx="1023.5" cy="86" r="1.7" fill="#222"/><circle cx="1029.5" cy="86" r="1.7" fill="#222"/>
<!-- 30 lightning -->
<path d="M1090 70 Q1094 66 1098 69 Q1102 73 1099 77 Q1097 81 1091 79Z" fill="#8a8a8a"/>
<path d="M1083 67 Q1084 63.5 1088 64 Q1092 61.5 1095 65 Q1097 68 1093 72 Q1092 77 1087 78 Q1082 79 1081.5 75 Q1079 71 1083 67Z" fill="#f6f6f6" stroke="#a0a0a0" stroke-width="0.6"/>
<path d="M1092.5 64 L1100.5 64 L1092.5 71.5 L1097.5 72.5 L1080 84.5 L1089.5 74.5 L1085.5 73.5Z" fill="#f5cc20" stroke="#b89410" stroke-width="0.7"/>
<!-- 31 exit -->
<rect x="1150.5" y="63.5" width="21" height="21" rx="2" fill="url(#g_exit)" stroke="#a01010"/>
<text x="1151.5" y="78" font-family="Liberation Sans" font-size="9.8" fill="#fff" textLength="19.5" lengthAdjust="spacingAndGlyphs">EXIT</text>
</svg>

</body></html>
